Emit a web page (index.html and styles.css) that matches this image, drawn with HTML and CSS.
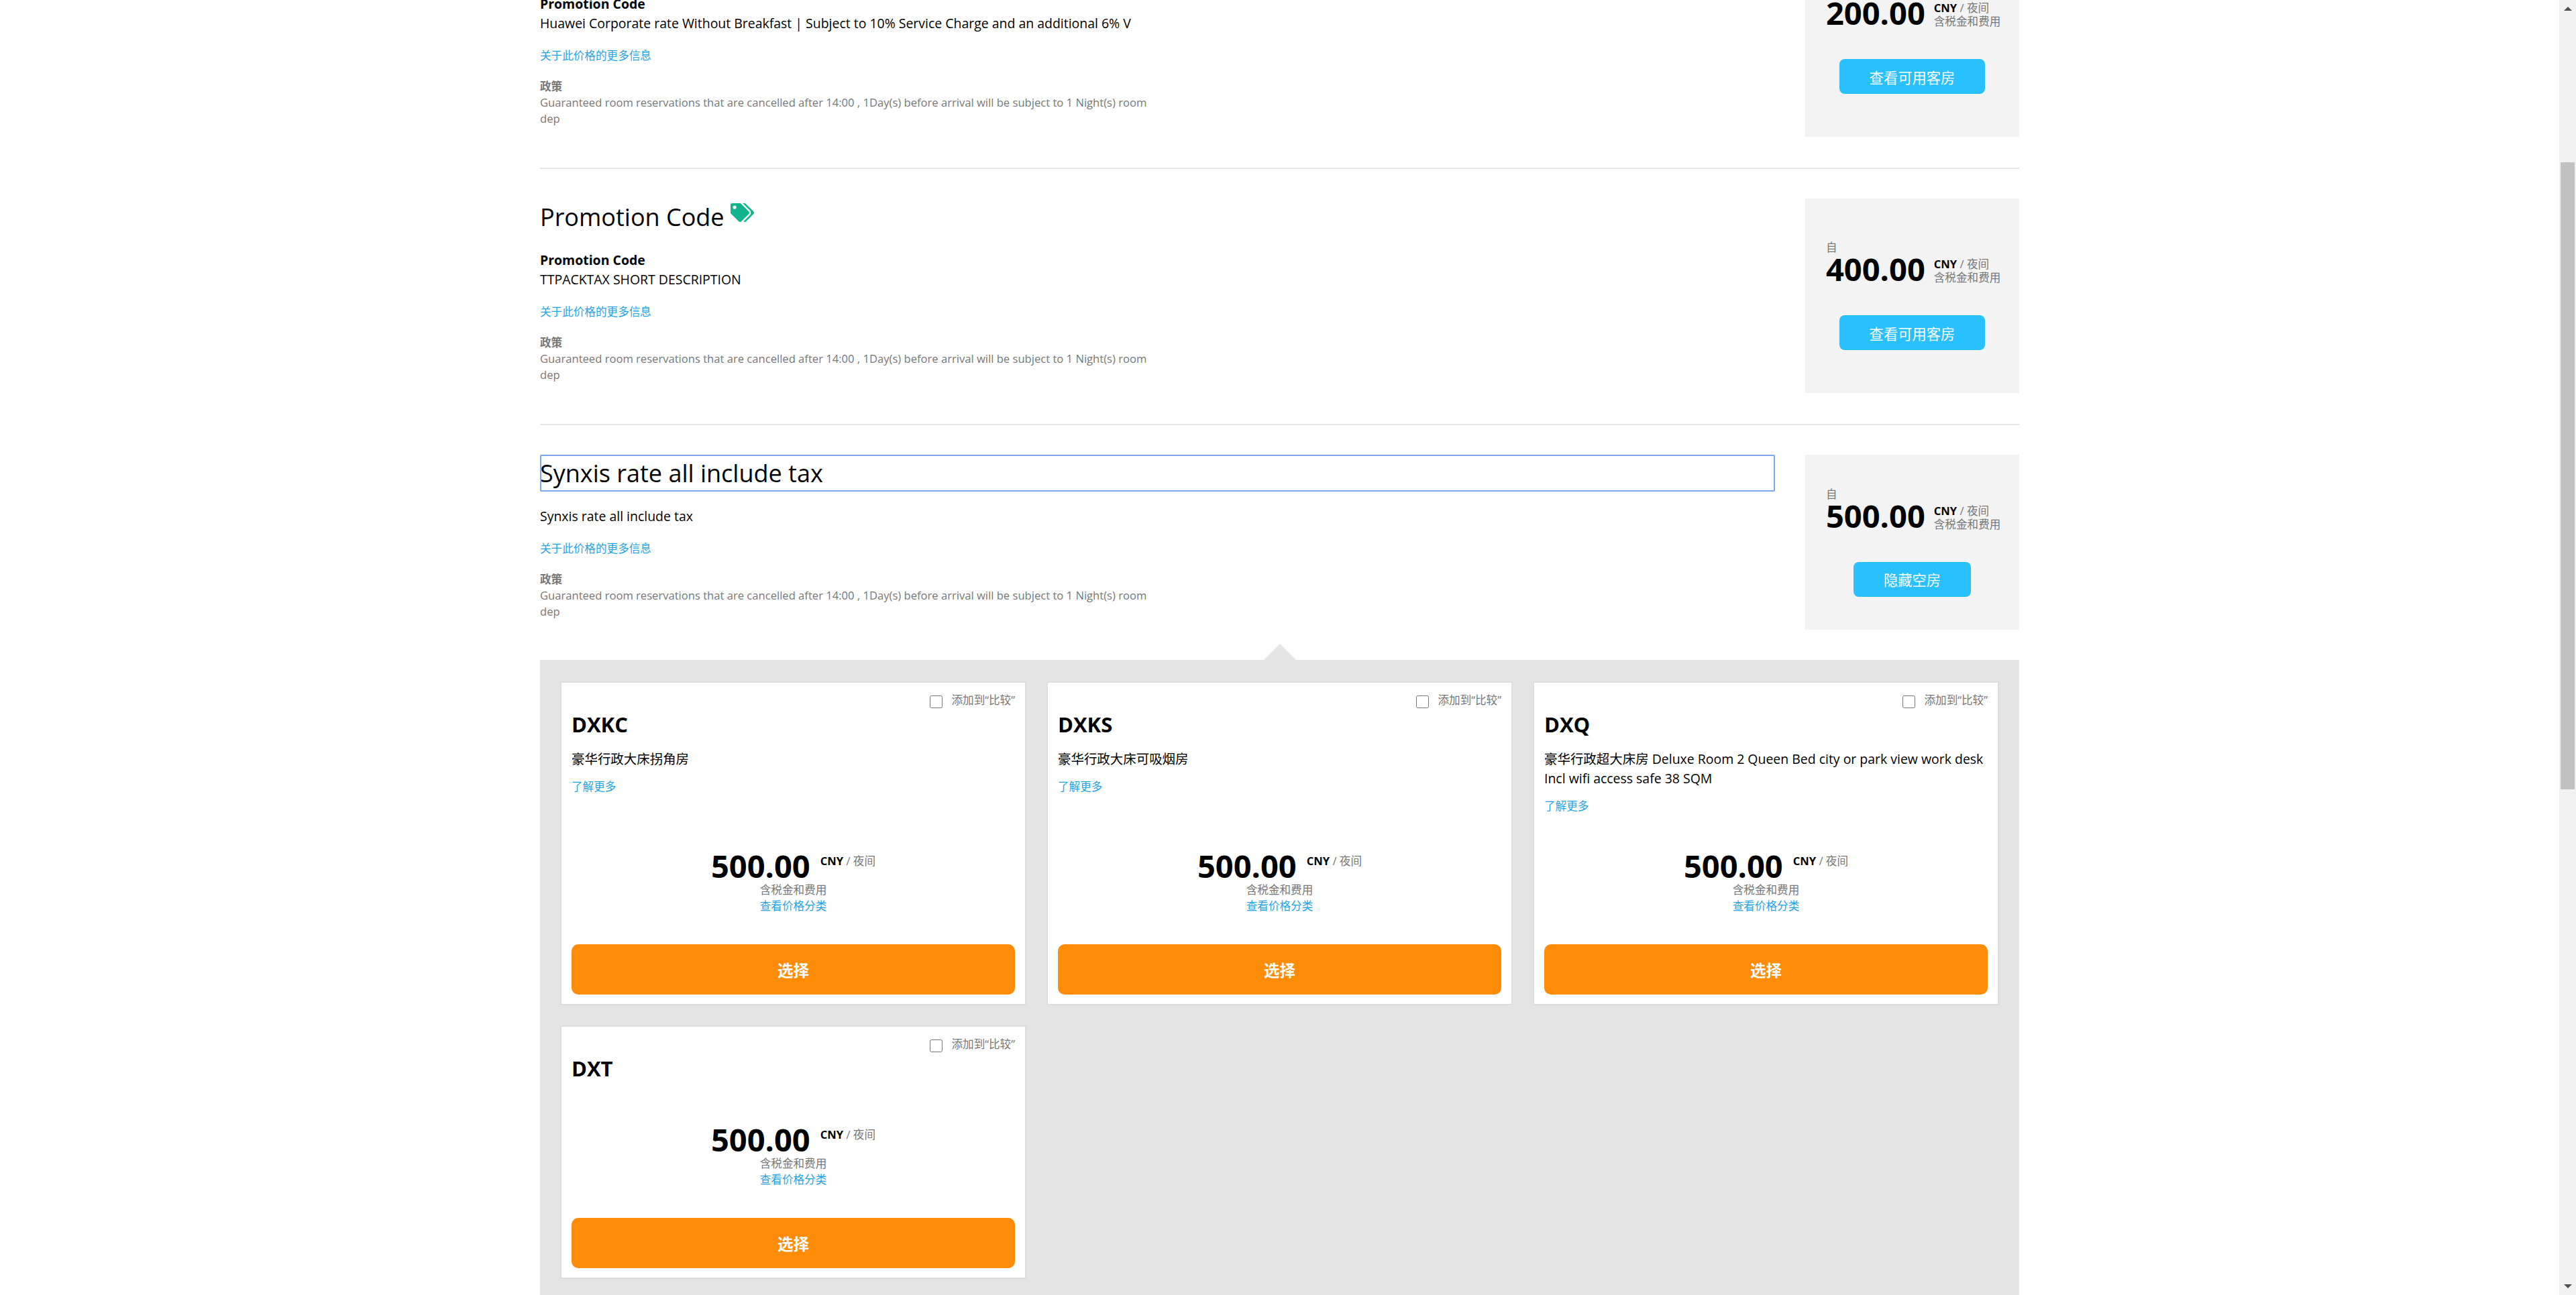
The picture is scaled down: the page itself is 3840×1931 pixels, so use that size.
FILE: index.html
```html
<!DOCTYPE html>
<html lang="zh">
<head>
<meta charset="utf-8">
<title>Rates</title>
<link rel="stylesheet" href="styles.css">
</head>
<body>
<div class="viewport">
  <main class="page">
    <section class="rate rate-first">
      <div class="rate-main">
        <p class="rate-label">Promotion Code</p>
        <p class="rate-desc">Huawei Corporate rate Without Breakfast | Subject to 10% Service Charge and an additional 6% V</p>
        <a class="link rate-more">关于此价格的更多信息</a>
        <p class="policy-title">政策</p>
        <p class="policy">Guaranteed room reservations that are cancelled after 14:00 , 1Day(s) before arrival will be subject to 1 Night(s) room dep</p>
      </div>
      <aside class="price-box">
        <div class="from">自</div>
        <div class="price-row"><span class="amount">200.00</span><span class="price-meta"><span class="per"><b>CNY</b> / 夜间</span><span class="tax">含税金和费用</span></span></div>
        <button class="btn-rooms">查看可用客房</button>
      </aside>
    </section>

    <section class="rate">
      <div class="rate-main">
        <h2 class="rate-title">Promotion Code <svg class="tag" viewBox="0 0 640 512"><path d="M497.941 225.941L286.059 14.059A48 48 0 0 0 252.118 0H48C21.49 0 0 21.49 0 48v204.118a48 48 0 0 0 14.059 33.941l211.882 211.882c18.744 18.745 49.136 18.746 67.882 0l204.118-204.118c18.745-18.745 18.745-49.137 0-67.882zM112 160c-26.51 0-48-21.49-48-48s21.49-48 48-48 48 21.49 48 48-21.49 48-48 48zm513.941 133.823L421.823 497.941c-18.745 18.745-49.137 18.745-67.882 0l-.36-.36L527.64 323.522c16.999-16.999 26.36-39.6 26.36-63.64s-9.362-46.641-26.36-63.64L331.397 0h48.721a48 48 0 0 1 33.941 14.059l211.882 211.882c18.745 18.745 18.745 49.137 0 67.882z"/></svg></h2>
        <p class="rate-label">Promotion Code</p>
        <p class="rate-desc">TTPACKTAX SHORT DESCRIPTION</p>
        <a class="link rate-more">关于此价格的更多信息</a>
        <p class="policy-title">政策</p>
        <p class="policy">Guaranteed room reservations that are cancelled after 14:00 , 1Day(s) before arrival will be subject to 1 Night(s) room dep</p>
      </div>
      <aside class="price-box">
        <div class="from">自</div>
        <div class="price-row"><span class="amount">400.00</span><span class="price-meta"><span class="per"><b>CNY</b> / 夜间</span><span class="tax">含税金和费用</span></span></div>
        <button class="btn-rooms">查看可用客房</button>
      </aside>
    </section>

    <section class="rate rate-open">
      <div class="rate-main">
        <h2 class="rate-title rate-title-focus">Synxis rate all include tax</h2>
        <p class="rate-desc">Synxis rate all include tax</p>
        <a class="link rate-more">关于此价格的更多信息</a>
        <p class="policy-title">政策</p>
        <p class="policy">Guaranteed room reservations that are cancelled after 14:00 , 1Day(s) before arrival will be subject to 1 Night(s) room dep</p>
      </div>
      <aside class="price-box">
        <div class="from">自</div>
        <div class="price-row"><span class="amount">500.00</span><span class="price-meta"><span class="per"><b>CNY</b> / 夜间</span><span class="tax">含税金和费用</span></span></div>
        <button class="btn-rooms">隐藏空房</button>
      </aside>
    </section>

    <section class="rooms">
      <article class="room">
        <label class="compare"><input type="checkbox"><span>添加到“比较”</span></label>
        <h3 class="room-code">DXKC</h3>
        <p class="room-desc">豪华行政大床拐角房</p>
        <a class="link room-more">了解更多</a>
        <div class="room-price">
          <div class="room-price-row"><span class="amount">500.00</span><span class="per"><b>CNY</b> / 夜间</span></div>
          <div class="tax">含税金和费用</div>
          <a class="link">查看价格分类</a>
        </div>
        <button class="btn-select">选择</button>
      </article>
      <article class="room">
        <label class="compare"><input type="checkbox"><span>添加到“比较”</span></label>
        <h3 class="room-code">DXKS</h3>
        <p class="room-desc">豪华行政大床可吸烟房</p>
        <a class="link room-more">了解更多</a>
        <div class="room-price">
          <div class="room-price-row"><span class="amount">500.00</span><span class="per"><b>CNY</b> / 夜间</span></div>
          <div class="tax">含税金和费用</div>
          <a class="link">查看价格分类</a>
        </div>
        <button class="btn-select">选择</button>
      </article>
      <article class="room">
        <label class="compare"><input type="checkbox"><span>添加到“比较”</span></label>
        <h3 class="room-code">DXQ</h3>
        <p class="room-desc">豪华行政超大床房 Deluxe Room 2 Queen Bed city or park view work desk Incl wifi access safe 38 SQM</p>
        <a class="link room-more">了解更多</a>
        <div class="room-price">
          <div class="room-price-row"><span class="amount">500.00</span><span class="per"><b>CNY</b> / 夜间</span></div>
          <div class="tax">含税金和费用</div>
          <a class="link">查看价格分类</a>
        </div>
        <button class="btn-select">选择</button>
      </article>
      <article class="room">
        <label class="compare"><input type="checkbox"><span>添加到“比较”</span></label>
        <h3 class="room-code">DXT</h3>
        <div class="room-price">
          <div class="room-price-row"><span class="amount">500.00</span><span class="per"><b>CNY</b> / 夜间</span></div>
          <div class="tax">含税金和费用</div>
          <a class="link">查看价格分类</a>
        </div>
        <button class="btn-select">选择</button>
      </article>
    </section>
  </main>
  <div class="scrollbar">
    <span class="arrow-up"></span>
    <div class="track"><div class="thumb"></div></div>
    <span class="arrow-down"></span>
  </div>
</div>
</body>
</html>
```
FILE: styles.css
```css
* { box-sizing: border-box; }
html, body { margin: 0; padding: 0; height: 100%; overflow: hidden; background: #fff; }
body { font-family: "Open Sans", "Noto Sans CJK SC", sans-serif; color: #000; }
p, h2, h3 { margin: 0; font-weight: normal; }

.viewport { display: flex; height: 1931px; overflow: hidden; }
.page { flex: none; width: 2205px; margin: -130px 805px 0; align-self: flex-start; }

.rate { display: flex; gap: 45px; padding: 44px 0 46px; border-bottom: 2px solid #e4e4e4; }
.rate-open { border-bottom: 0; padding-bottom: 45px; }
.rate-main { flex: none; width: 1841px; padding-bottom: 15px; }
.rate-first .rate-main { padding-top: 77px; }

.rate-title { font-size: 36px; line-height: 55px; height: 55px; margin-bottom: 22px; }
.rate-title-focus { outline: 2px solid #7ba7f5; outline-offset: -2px; border-radius: 2px; }
.tag { width: 35px; height: 28px; fill: #12b48f; vertical-align: 6px; }

.rate-label { font-size: 19.47px; line-height: 29px; font-weight: 700; }
.rate-desc { font-size: 19.47px; line-height: 29px; margin-bottom: 22px; }
.link { color: #1ea3e8; font-size: 16.6px; line-height: 24px; display: block; }
.rate-more { margin-bottom: 22px; }
.policy-title { font-size: 16.6px; line-height: 24px; font-weight: 700; color: #777; }
.policy { font-size: 16.6px; line-height: 24px; color: #777; width: 920px; }

.price-box { flex: none; width: 319px; background: #f3f3f3; display: flex; flex-direction: column; justify-content: center; padding: 0 0 0 31px; }
.from { font-size: 16.6px; line-height: 18px; color: #777; }
.amount { font-size: 47px; line-height: 46px; font-weight: 700; }
.price-row { display: flex; gap: 13px; }
.price-meta { display: flex; flex-direction: column; justify-content: flex-end; }
.per { font-size: 16.6px; line-height: 20px; color: #777; white-space: nowrap; }
.per b { color: #000; font-weight: 700; }
.tax { font-size: 16.6px; line-height: 20px; color: #777; }
.btn-rooms { align-self: center; margin: 46px 0 0 -31px; height: 52px; padding: 0 45px; border: 0; border-radius: 8px; background: #29c0ff; color: #fff; font: 21.3px "Open Sans", "Noto Sans CJK SC", sans-serif; }

.rooms { position: relative; background: #e4e4e4; padding: 32px 30px; display: grid; grid-template-columns: repeat(3, 1fr); gap: 30px; }
.rooms::before { content: ""; position: absolute; left: 50%; top: -24px; margin-left: -24px; border: solid transparent; border-width: 0 24px 24px; border-bottom-color: #e4e4e4; }

.room { background: #fff; border: 2px solid #dedede; padding: 0 15px 14px; display: flex; flex-direction: column; }
.compare { display: flex; justify-content: flex-end; align-items: flex-start; gap: 13px; height: 41px; padding-top: 14px; font-size: 16.6px; line-height: 24px; color: #777; }
.compare input { width: 19px; height: 19px; margin: 5px 0 0; }
.room-code { font-size: 31px; line-height: 42px; font-weight: 700; margin-bottom: 8px; }
.room-desc { font-size: 19.47px; line-height: 29px; margin: 8px 0 15px; }
.room-more { margin-bottom: 0; }
.room-price { margin-top: auto; padding-top: 54px; text-align: center; }
.room-price-row { display: flex; justify-content: center; align-items: flex-start; gap: 15px; }
.room-price-row .per { margin-top: 6px; }
.room-price .tax { line-height: 24px; margin-top: 1px; }
.btn-select { margin-top: 45px; height: 75px; border: 0; border-radius: 10px; background: #ff8c08; color: #fff; font: 700 23.5px "Open Sans", "Noto Sans CJK SC", sans-serif; }

.scrollbar { flex: none; width: 25px; margin-left: auto; height: 1931px; background: #f1f1f1; display: flex; flex-direction: column; align-items: center; padding: 10px 0; }
.arrow-up { border: solid transparent; border-width: 0 6px 6px; border-bottom-color: #505050; }
.arrow-down { border: solid transparent; border-width: 6px 6px 0; border-top-color: #505050; }
.track { flex: 1; width: 21px; padding-top: 226px; }
.thumb { height: 935px; background: #c1c1c1; }
```
